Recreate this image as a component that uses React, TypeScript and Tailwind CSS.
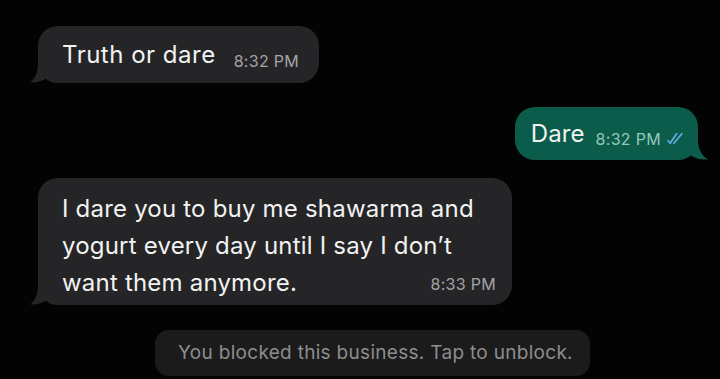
function TailLeft({ color }: { color: string }) {
  return (
    <svg className="absolute -left-[8px] bottom-0" width="22" height="20" viewBox="0 0 22 20">
      <path d="M22 0 L8 0 C8 8 6 15 0 19.5 C7 20 13 18 17 15 L22 15 Z" fill={color} />
    </svg>
  );
}

function TailRight({ color }: { color: string }) {
  return (
    <svg className="absolute -right-[10px] bottom-0" width="22" height="20" viewBox="0 0 22 20">
      <path d="M0 0 L12 0 C12 8 15 15 22 19.5 C14 20 8 18 4 15 L0 15 Z" fill={color} />
    </svg>
  );
}

function Ticks() {
  return (
    <svg width="17" height="13" viewBox="0 0 16 12" className="ml-[6px]">
      <path d="M1 8 L3 10.5 L9 1.5" stroke="#66b0ea" strokeWidth="1.5" fill="none" strokeLinecap="round" strokeLinejoin="round" />
      <path d="M6.5 10.5 L14 1.5" stroke="#66b0ea" strokeWidth="1.5" fill="none" strokeLinecap="round" />
    </svg>
  );
}

export default function App() {
  return (
    <div className="w-[720px] h-[379px] bg-[#030303] overflow-hidden flex flex-col font-['Inter',sans-serif] text-[#f2f2f2]">
      <div className="ml-[38px] mt-[26px] relative self-start">
        <div className="relative bg-[#252527] rounded-[20px] h-[57px] pl-[24px] pr-[20px] flex items-center">
          <span className="text-[24px] tracking-[0.5px]">Truth or dare</span>
          <span className="ml-[18px] mt-[12px] text-[16px] tracking-[0.3px] text-[#a3a3a5]">8:32 PM</span>
        </div>
        <TailLeft color="#252527" />
      </div>

      <div className="mr-[22px] mt-[24px] relative self-end">
        <div className="relative bg-[#0c5c4b] rounded-[20px] h-[53px] pl-[16px] pr-[14px] flex items-center">
          <span className="text-[24px] tracking-[0.1px]">Dare</span>
          <span className="ml-[11px] mt-[10px] text-[16px] tracking-[0.3px] text-[#93c9b9] flex items-center">
            8:32 PM
            <Ticks />
          </span>
        </div>
        <TailRight color="#0c5c4b" />
      </div>

      <div className="ml-[38px] mt-[18px] relative self-start">
        <div className="relative bg-[#252527] rounded-[20px] w-[474px] h-[127px] pl-[24px] pr-[18px] pt-[12px]">
          <p className="text-[24px] tracking-[0.2px] leading-[37px]">
            I dare you to buy me shawarma and
            <br />
            yogurt every day until I say I don’t
            <br />
            want them anymore.
          </p>
          <span className="absolute right-[16px] bottom-[9px] text-[16px] tracking-[0.3px] text-[#a3a3a5]">8:33 PM</span>
        </div>
        <TailLeft color="#252527" />
      </div>

      <div className="ml-[155px] mt-[25px] self-start bg-[#1b1b1c] rounded-[14px] w-[435px] h-[46px] flex items-center justify-center">
        <span className="ml-[6px] text-[19px] tracking-[0.3px] text-[#8d8d8f]">You blocked this business. Tap to unblock.</span>
      </div>
    </div>
  );
}
